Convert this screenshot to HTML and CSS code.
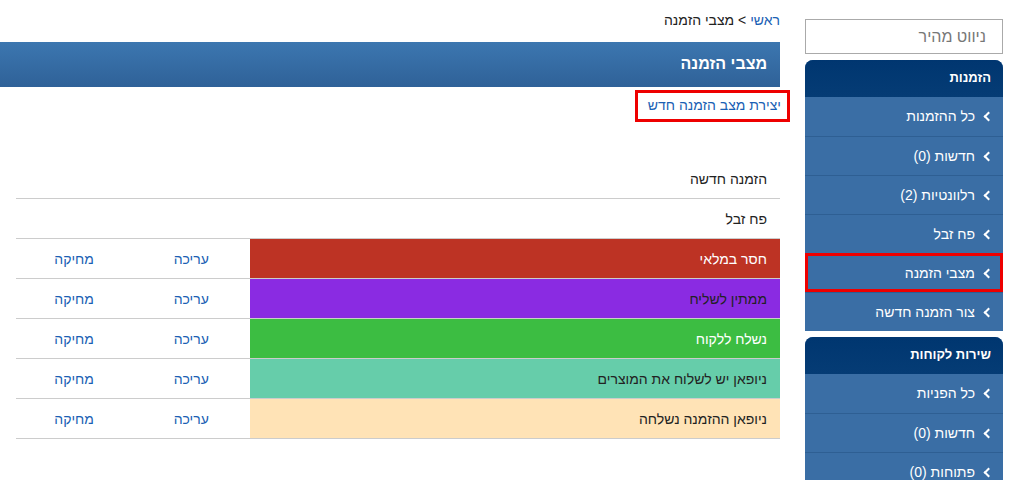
FILE: index.html
```html
<!DOCTYPE html>
<html lang="he" dir="rtl">
<head>
    <meta charset="UTF-8">
    <title>מצבי הזמנה</title>
    <link rel="stylesheet" href="styles.css">
</head>
<body>
    <div class="page">
        <aside class="sidebar">
            <input class="quick-nav" type="text" placeholder="ניווט מהיר">

            <div class="nav-panel">
                <div class="nav-title">הזמנות</div>
                <a class="nav-item" href="#">כל ההזמנות</a>
                <a class="nav-item" href="#">חדשות (0)</a>
                <a class="nav-item" href="#">רלוונטיות (2)</a>
                <a class="nav-item" href="#">פח זבל</a>
                <a class="nav-item marked" href="#">מצבי הזמנה</a>
                <a class="nav-item" href="#">צור הזמנה חדשה</a>
            </div>

            <div class="nav-panel">
                <div class="nav-title">שירות לקוחות</div>
                <a class="nav-item" href="#">כל הפניות</a>
                <a class="nav-item" href="#">חדשות (0)</a>
                <a class="nav-item" href="#">פתוחות (0)</a>
            </div>
        </aside>

        <main class="content">
            <div class="breadcrumb"><a href="#">ראשי</a> &gt; מצבי הזמנה</div>
            <h1 class="page-title">מצבי הזמנה</h1>
            <div class="actions">
                <a class="create-link" href="#">יצירת מצב הזמנה חדש</a>
            </div>

            <table class="status-table">
                <tr class="plain">
                    <td class="name">הזמנה חדשה</td>
                    <td></td>
                    <td></td>
                </tr>
                <tr class="plain">
                    <td class="name">פח זבל</td>
                    <td></td>
                    <td></td>
                </tr>
                <tr>
                    <td class="name st-missing">חסר במלאי</td>
                    <td class="op"><a href="#">עריכה</a></td>
                    <td class="op"><a href="#">מחיקה</a></td>
                </tr>
                <tr>
                    <td class="name st-courier">ממתין לשליח</td>
                    <td class="op"><a href="#">עריכה</a></td>
                    <td class="op"><a href="#">מחיקה</a></td>
                </tr>
                <tr>
                    <td class="name st-sent">נשלח ללקוח</td>
                    <td class="op"><a href="#">עריכה</a></td>
                    <td class="op"><a href="#">מחיקה</a></td>
                </tr>
                <tr>
                    <td class="name st-todo">ניופאן יש לשלוח את המוצרים</td>
                    <td class="op"><a href="#">עריכה</a></td>
                    <td class="op"><a href="#">מחיקה</a></td>
                </tr>
                <tr>
                    <td class="name st-done">ניופאן ההזמנה נשלחה</td>
                    <td class="op"><a href="#">עריכה</a></td>
                    <td class="op"><a href="#">מחיקה</a></td>
                </tr>
            </table>
        </main>
    </div>
</body>
</html>
```

FILE: styles.css
```css
body {
    font-family: "Liberation Sans", Arial, sans-serif;
    font-size: 14px;
    color: #222;
    margin: 0;
    background: #fff;
}
a {
    color: #1a5fb4;
    text-decoration: none;
}
.page {
    display: flex;
    align-items: flex-start;
    gap: 25px;
    padding-right: 8px;
}
.sidebar {
    width: 198px;
    flex: none;
    padding-top: 19px;
}
.quick-nav {
    display: block;
    box-sizing: border-box;
    width: 198px;
    height: 35px;
    margin: 0 0 6px;
    padding: 0 16px;
    border: 1px solid #aaa;
    font-family: inherit;
    font-size: 16px;
    color: #333;
}
.quick-nav::placeholder {
    color: #777;
}
.nav-panel {
    background: #3a6ea5;
    border-radius: 8px 8px 0 0;
    overflow: hidden;
    margin-bottom: 6px;
}
.nav-title {
    height: 37px;
    line-height: 35px;
    padding-right: 12px;
    background: linear-gradient(#003670, #053c75);
    color: #fff;
    font-weight: bold;
    font-size: 13px;
}
.nav-item {
    display: block;
    position: relative;
    height: 38px;
    line-height: 38px;
    padding-right: 28px;
    color: #fff;
    font-size: 14px;
    border-top: 1px solid #2e5f93;
}
.nav-title + .nav-item {
    border-top: 0;
    height: 39px;
}
.nav-item::before {
    content: "";
    position: absolute;
    right: 11px;
    top: 16px;
    width: 5px;
    height: 5px;
    border-left: 2px solid #fff;
    border-bottom: 2px solid #fff;
    transform: rotate(45deg);
}
.nav-item.marked {
    outline: 3px solid #e00;
    outline-offset: -3px;
    z-index: 1;
}
.content {
    flex: 1;
    min-width: 0;
    padding-left: 16px;
}
.breadcrumb {
    padding: 12px 0 0;
    height: 42px;
    box-sizing: border-box;
    color: #222;
}
.page-title {
    margin: 0 0 0 -16px;
    height: 45px;
    line-height: 44px;
    padding-right: 13px;
    font-size: 16px;
    color: #fff;
    background: linear-gradient(#3c77b0, #2f6198);
}
.actions {
    display: flex;
    margin: 3px -10px 0 0;
    height: 70px;
    align-items: flex-start;
}
.create-link {
    display: block;
    border: 3px solid #e00;
    padding: 3px 6px 4px 10px;
    line-height: 19px;
    color: #1a5fb4;
}
.status-table {
    width: 100%;
    border-collapse: collapse;
}
.status-table td {
    height: 39px;
    padding: 0;
    border-top: 1px solid #ccc;
}
.status-table tr:first-child td {
    border-top: 0;
    height: 38px;
}
.status-table tr:last-child td {
    border-bottom: 1px solid #ccc;
}
.status-table .name {
    width: 516px;
    padding-right: 13px;
}
.status-table .op {
    text-align: center;
    width: 118px;
}
.status-table .op:last-child {
    width: 116px;
}
.st-missing {
    background: #bd3324;
    color: #fff;
}
.st-courier {
    background: #8a2be2;
    color: #222;
}
.st-sent {
    background: #3cbd42;
    color: #fff;
}
.st-todo {
    background: #66cdaa;
}
.st-done {
    background: #ffe3b6;
}
```
